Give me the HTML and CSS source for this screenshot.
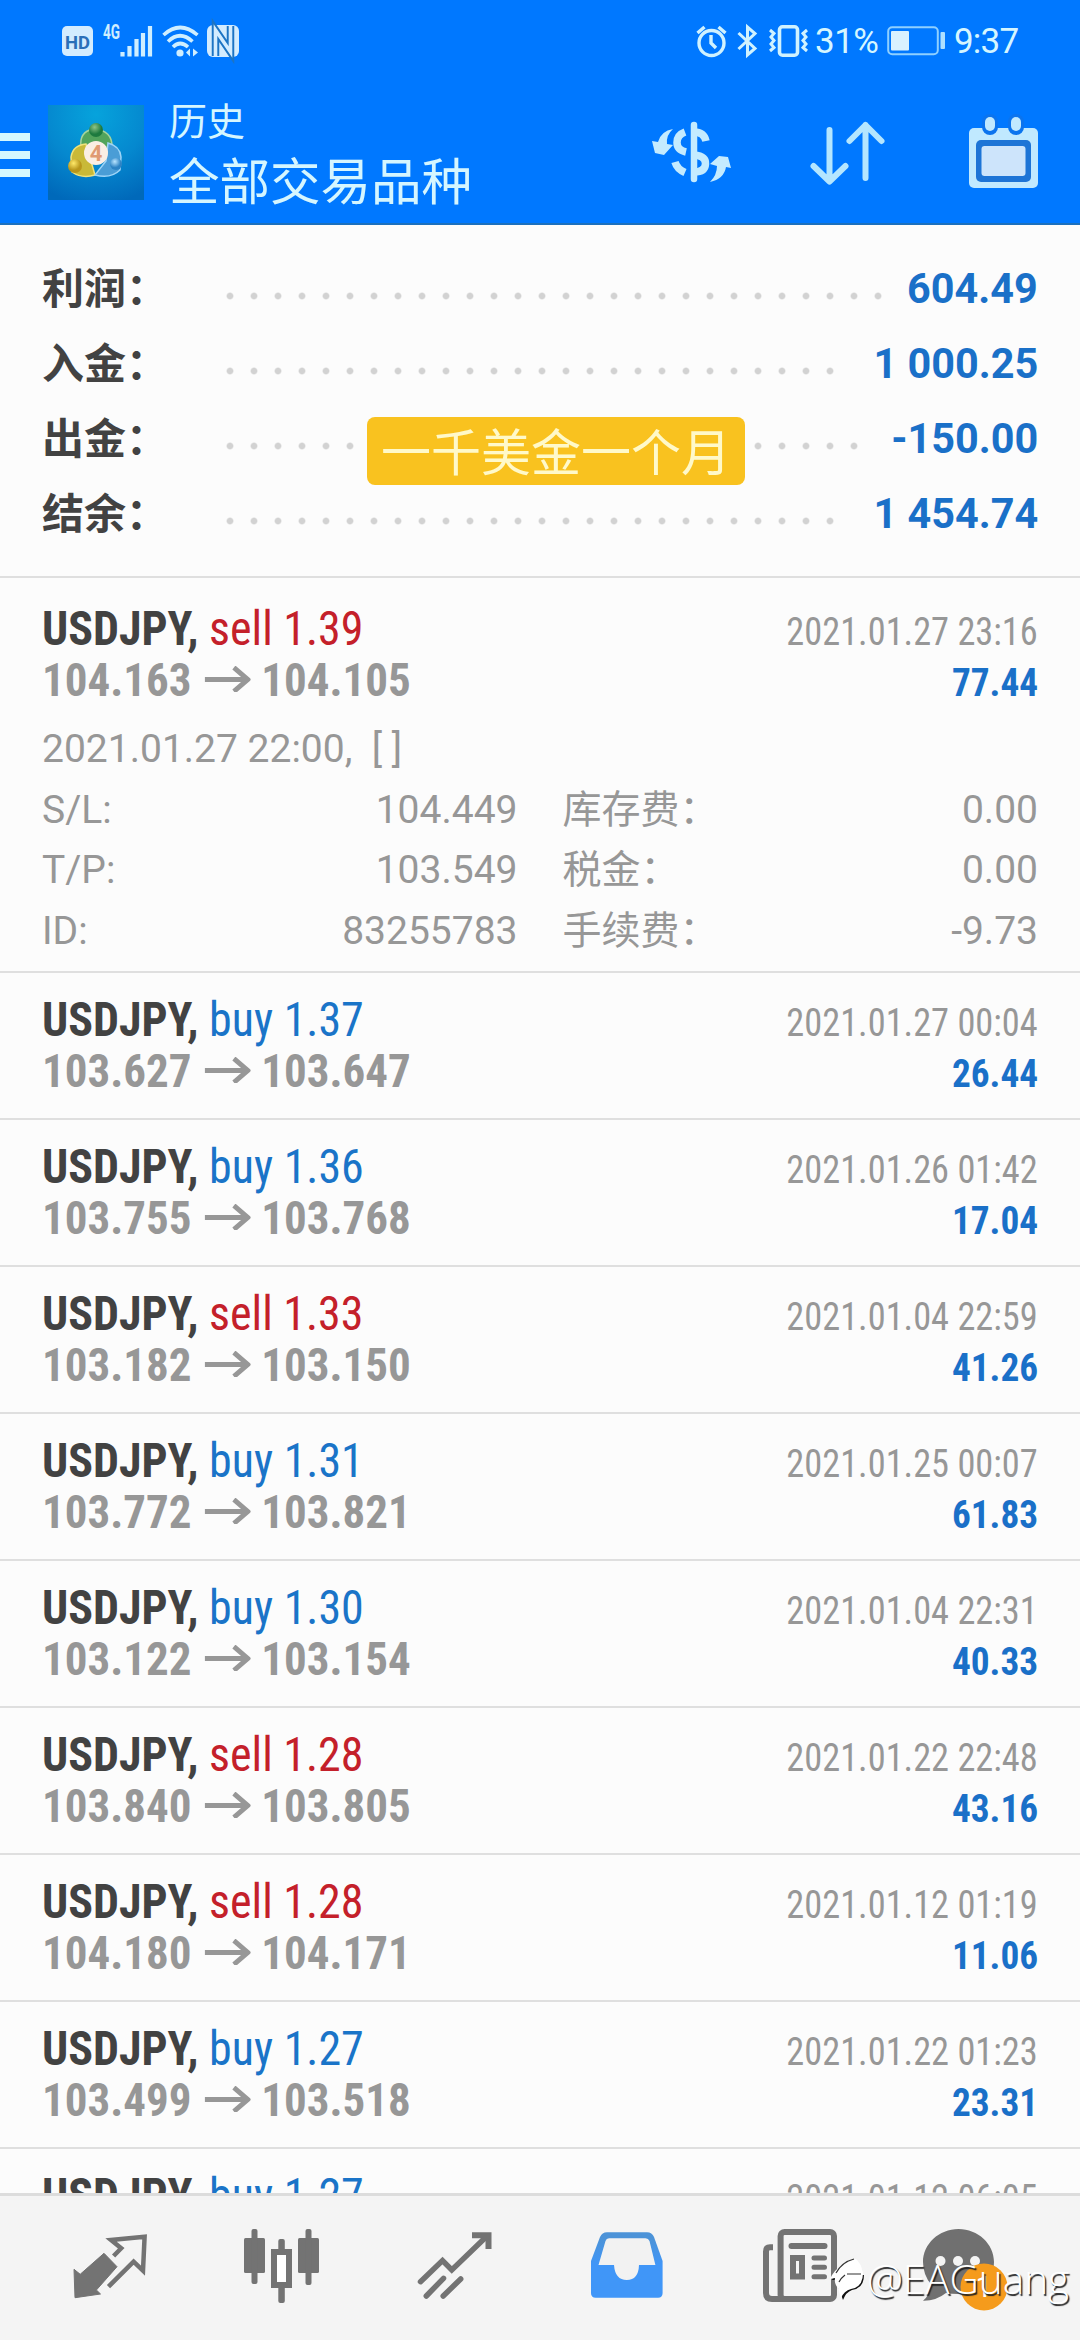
FILE: index.html
```
<!DOCTYPE html>
<html lang="zh-CN">
<head>
<meta charset="utf-8">
<title>历史</title>
<link rel="stylesheet" href="styles.css">
</head>
<body>
<header class="header">
  <div class="status">
    <svg class="st-hd" width="31" height="32" viewBox="0 0 31 32"><rect x="0" y="1" width="31" height="30" rx="5" fill="#d3ecff"/><text x="15.500" y="23.500" text-anchor="middle" class="hd-text" textLength="25" lengthAdjust="spacingAndGlyphs" >HD</text></svg>
    <svg class="st-signal" width="50" height="32" viewBox="0 0 50 32"><text x="0" y="14" class="g-text" textLength="17" lengthAdjust="spacingAndGlyphs">4G</text><path d="M19.500 27v4.500M26.500 21v10.500M33.500 14v17.500M40 8v23.500M47 1v30.500" stroke="#cfeeff" stroke-width="4.200"/></svg>
    <svg class="st-wifi" width="38" height="32" viewBox="0 0 38 32"><g fill="none" stroke="#cfeeff" stroke-width="3.600"><path d="M1.500 10Q18 -5 35.500 10"/><path d="M6 16.500Q18 5 30.500 16.500"/><path d="M11 22Q18 15 26 22"/></g><circle cx="18" cy="28" r="3.600" fill="#cfeeff"/><path d="M28 23.500v8l-4-4zM31 23.500v8l5-4z" fill="#cfeeff"/></svg>
    <svg class="st-nfc" width="32" height="32" viewBox="0 0 32 32"><rect width="32" height="32" rx="6" fill="#d3ecff"/><path d="M8.500 31V5L23.500 27V1" fill="none" stroke="#1c74c4" stroke-width="7.500"/><path d="M8.500 31V5L23.500 27V1" fill="none" stroke="#d3ecff" stroke-width="3.600"/></svg>
    <svg class="st-alarm" width="31" height="32" viewBox="0 0 31 32"><g fill="none" stroke="#cff2ff" stroke-width="3.400"><circle cx="15.500" cy="18" r="12.500"/><path d="M15 10v8l5 5M1.500 8l7-6M29.500 8l-7-6"/></g></svg>
    <svg class="st-bt" width="21" height="32" viewBox="0 0 21 32"><path d="M1.500 8L18 23.500 10.500 30V2L18 8.500 1.500 24" fill="none" stroke="#cff2ff" stroke-width="3"/></svg>
    <svg class="st-vib" width="39" height="32" viewBox="0 0 39 32"><g fill="none" stroke="#cff2ff" stroke-width="3"><rect x="10.500" y="1.800" width="18" height="28.400" rx="3" stroke-width="3.600"/><path d="M1 5l4 3.500-3 3.500 3 3.500-3 3.500 3 3.500-4 3.500M38 5l-4 3.500 3 3.500-3 3.500 3 3.500-3 3.500 4 3.500"/></g></svg>
    <span class="st-pct">31%</span>
    <svg class="st-batt" width="59" height="30" viewBox="0 0 59 30"><rect x="1.200" y="1.200" width="49.600" height="27" rx="4" fill="none" stroke="#8fd0ff" stroke-width="2"/><rect x="4" y="5" width="18" height="19.500" rx="1" fill="#d9f1ff"/><rect x="53.500" y="6" width="4.500" height="17" rx="1" fill="#aee0ff"/></svg>
    <span class="st-time">9:37</span>
  </div>
  <div class="appbar">
    <div class="burger"><i></i><i></i><i></i></div>
    <svg class="logo" width="96" height="95" viewBox="0 0 96 95">
      <defs>
        <radialGradient id="sky" cx=".5" cy=".1" r=".95"><stop offset="0" stop-color="#06a3dc"/><stop offset=".55" stop-color="#0588cf"/><stop offset="1" stop-color="#0069ba"/></radialGradient>
        <radialGradient id="gr" cx=".4" cy=".3"><stop offset="0" stop-color="#8fc487"/><stop offset="1" stop-color="#1d7a3e"/></radialGradient>
        <radialGradient id="ye" cx=".4" cy=".3"><stop offset="0" stop-color="#ffe96a"/><stop offset="1" stop-color="#b8961b"/></radialGradient>
        <radialGradient id="bl" cx=".4" cy=".3"><stop offset="0" stop-color="#b9e4ff"/><stop offset="1" stop-color="#2d83c4"/></radialGradient>
      </defs>
      <rect width="96" height="95" fill="url(#sky)"/>
      <path d="M33 42Q31 27 45 24q20 1 19 19l-6 5H38z" fill="#52a45c" stroke="#a5d39c" stroke-width="1.500"/>
      <path d="M38 39Q25 40 23 52L24 67q10 7 23 3z" fill="#c9b938" stroke="#f0e27b" stroke-width="1.500"/>
      <path d="M60 38q12 3 13 14l-1 13q-9 9-25 5l11-14z" fill="#4a9dd6" stroke="#9dd4f7" stroke-width="1.500"/>
      <circle cx="48" cy="25" r="7" fill="url(#gr)"/><circle cx="27" cy="61" r="7" fill="url(#ye)"/><circle cx="68" cy="59" r="6" fill="url(#bl)"/>
      <circle cx="48" cy="48" r="12" fill="#faeee4"/><text x="48" y="56" text-anchor="middle" class="logo-text">4</text>
    </svg>
    <div class="titles"><div class="t1">历史</div><div class="t2">全部交易品种</div></div>
    <svg class="act-usd" width="80" height="64" viewBox="0 0 80 64"><g fill="none" stroke="#c4ebff" stroke-width="7.500"><path d="M34 11Q26 14 26 21.500T35 31"/><path d="M43 11Q53 11 55 20"/><path d="M43 34Q55 35 54.500 43T43 51"/><path d="M24 41Q26 48 34 51.500"/></g><path d="M43 4v54" stroke="#c4ebff" stroke-width="6.500" stroke-linecap="round"/><path d="M22 8Q10 10 7 21L1 20l3 12 9 2 9-10-6-1Q15 14 22 8zM59 61q14-3 16-15l5 1-3-11-9-1-9 8 7 2q0 9-7 16z" fill="#c4ebff"/></svg>
    <svg class="act-sort" width="73" height="64" viewBox="0 0 73 64"><path d="M18.500 9v51M2.500 45L18.500 60.500 34.500 45M54.500 57V4M38.500 20L54.500 4 70.500 20" fill="none" stroke="#b4e6ff" stroke-width="6" stroke-linecap="round" stroke-linejoin="round"/></svg>
    <svg class="act-cal" width="70" height="72" viewBox="0 0 70 72"><rect x="0" y="11" width="69" height="60" rx="5" fill="#c0e9ff"/><rect x="7" y="23" width="55" height="42" rx="5" fill="#1d74d6"/><rect x="12.500" y="29" width="44" height="30" rx="3" fill="#cde4fb"/><rect x="13" y="-3" width="16" height="21" rx="8" fill="#0b74ee"/><rect x="39" y="-3" width="16" height="21" rx="8" fill="#0b74ee"/><rect x="16" y="0" width="10" height="14" rx="5" fill="#c0e9ff"/><rect x="42" y="0" width="10" height="14" rx="5" fill="#c0e9ff"/></svg>
  </div>
</header>

<section class="summary">
  <div class="sum-row"><span class="label">利润：</span><span class="dots dots-28"></span><span class="amount">604.49</span></div>
  <div class="sum-row"><span class="label">入金：</span><span class="dots dots-26"></span><span class="amount">1 000.25</span></div>
  <div class="sum-row"><span class="label">出金：</span><span class="dots dots-27"></span><span class="amount">-150.00</span></div>
  <div class="sum-row"><span class="label">结余：</span><span class="dots dots-26"></span><span class="amount">1 454.74</span></div>
  <div class="sticker">一千美金一个月</div>
</section>

<svg width="0" height="0" class="defs"><symbol id="arrow" viewBox="0 0 48 26"><path d="M0 13.500h44M30.500 1.500L45 13.500 30.500 25.500" fill="none" stroke="#979797" stroke-width="5"/></symbol></svg>

<main class="list">
  <article class="deal open">
    <div class="line"><span class="name"><b>USDJPY,</b> <span class="sell">sell 1.39</span></span><span class="date">2021.01.27 23:16</span></div>
    <div class="line"><span class="price">104.163<svg class="arr"><use href="#arrow"/></svg>104.105</span><span class="profit">77.44</span></div>
    <div class="detail">
      <div class="wide">2021.01.27 22:00,&nbsp; [ ]</div>
      <div class="pair"><span>S/L:</span><span>104.449</span></div><div class="pair"><span>库存费：</span><span>0.00</span></div>
      <div class="pair"><span>T/P:</span><span>103.549</span></div><div class="pair"><span>税金：</span><span>0.00</span></div>
      <div class="pair"><span>ID:</span><span>83255783</span></div><div class="pair"><span>手续费：</span><span>-9.73</span></div>
    </div>
  </article>
  <article class="deal">
    <div class="line"><span class="name"><b>USDJPY,</b> <span class="buy">buy 1.37</span></span><span class="date">2021.01.27 00:04</span></div>
    <div class="line"><span class="price">103.627<svg class="arr"><use href="#arrow"/></svg>103.647</span><span class="profit">26.44</span></div>
  </article>
  <article class="deal">
    <div class="line"><span class="name"><b>USDJPY,</b> <span class="buy">buy 1.36</span></span><span class="date">2021.01.26 01:42</span></div>
    <div class="line"><span class="price">103.755<svg class="arr"><use href="#arrow"/></svg>103.768</span><span class="profit">17.04</span></div>
  </article>
  <article class="deal">
    <div class="line"><span class="name"><b>USDJPY,</b> <span class="sell">sell 1.33</span></span><span class="date">2021.01.04 22:59</span></div>
    <div class="line"><span class="price">103.182<svg class="arr"><use href="#arrow"/></svg>103.150</span><span class="profit">41.26</span></div>
  </article>
  <article class="deal">
    <div class="line"><span class="name"><b>USDJPY,</b> <span class="buy">buy 1.31</span></span><span class="date">2021.01.25 00:07</span></div>
    <div class="line"><span class="price">103.772<svg class="arr"><use href="#arrow"/></svg>103.821</span><span class="profit">61.83</span></div>
  </article>
  <article class="deal">
    <div class="line"><span class="name"><b>USDJPY,</b> <span class="buy">buy 1.30</span></span><span class="date">2021.01.04 22:31</span></div>
    <div class="line"><span class="price">103.122<svg class="arr"><use href="#arrow"/></svg>103.154</span><span class="profit">40.33</span></div>
  </article>
  <article class="deal">
    <div class="line"><span class="name"><b>USDJPY,</b> <span class="sell">sell 1.28</span></span><span class="date">2021.01.22 22:48</span></div>
    <div class="line"><span class="price">103.840<svg class="arr"><use href="#arrow"/></svg>103.805</span><span class="profit">43.16</span></div>
  </article>
  <article class="deal">
    <div class="line"><span class="name"><b>USDJPY,</b> <span class="sell">sell 1.28</span></span><span class="date">2021.01.12 01:19</span></div>
    <div class="line"><span class="price">104.180<svg class="arr"><use href="#arrow"/></svg>104.171</span><span class="profit">11.06</span></div>
  </article>
  <article class="deal">
    <div class="line"><span class="name"><b>USDJPY,</b> <span class="buy">buy 1.27</span></span><span class="date">2021.01.22 01:23</span></div>
    <div class="line"><span class="price">103.499<svg class="arr"><use href="#arrow"/></svg>103.518</span><span class="profit">23.31</span></div>
  </article>
  <article class="deal">
    <div class="line"><span class="name"><b>USDJPY,</b> <span class="buy">buy 1.27</span></span><span class="date">2021.01.12 06:05</span></div>
  </article>
</main>

<nav class="nav">
  <svg viewBox="0 0 100 100"><path d="M14 51.300L20.200 56.300 44 35.300 57 48.700 36.400 72 40.500 76 15 79.700z" fill="#737373" stroke="#737373" stroke-linejoin="round"/><path d="M53.600 38L61.200 30.300 51 22 84.600 18.700 83 52.700 73.600 43.700 48.500 68.700" fill="none" stroke="#737373" stroke-width="4.500"/></svg>
  <svg viewBox="0 0 100 100"><g fill="#737373"><rect x="12" y="20" width="21" height="35" rx="1.500"/><rect x="66" y="20" width="21" height="35" rx="1.500"/><rect x="19.500" y="11" width="6" height="55" rx="2"/><rect x="73.500" y="11" width="6" height="56" rx="2"/><rect x="46.300" y="21" width="6.500" height="14" rx="2"/><rect x="46.300" y="67" width="6.500" height="18" rx="2"/></g><rect x="42" y="34" width="15" height="33" fill="#fff" stroke="#737373" stroke-width="6"/></svg>
  <svg viewBox="0 0 100 100"><g fill="none" stroke="#737373" stroke-width="5.500" stroke-linecap="round"><path d="M16.500 63.700L38.500 42.500 47.800 52 82 19"/><path d="M22.300 78L39.500 60.300M39.200 78L56.700 61"/></g><path d="M68 17.300h16.500V31" fill="none" stroke="#737373" stroke-width="6"/></svg>
  <svg viewBox="0 0 100 100"><defs><linearGradient id="tray" x1="0" y1="0" x2="0" y2="1"><stop offset=".1" stop-color="#4c93d8"/><stop offset=".5" stop-color="#4096f8"/></linearGradient></defs><path d="M15 75V43L24 19Q26 14.300 31 14.300H71Q76 14.300 78 19L86.600 43V75Q86.600 79.700 82 79.700H19.700Q15 79.700 15 75z" fill="url(#tray)"/><path d="M22.500 47L29.500 23Q30.300 20.300 33 20.300H69.500Q72.500 20.300 73.500 23L79.400 47H63Q62.500 62 50.800 62T38 47z" fill="#f2f2f2"/></svg>
  <svg viewBox="0 0 100 100"><g fill="none" stroke="#737373" stroke-width="6"><rect x="32.600" y="14" width="53.400" height="67" rx="4"/><path d="M25 29.300H22Q18 29.300 18 33.500V75Q18 81 24 81H60"/><rect x="45" y="40" width="9" height="18.500"/><path d="M43.500 28H76.500" stroke-linecap="round"/><path d="M66 40H76.500M66 49.300H76.500M66 58.700H76.500" stroke-width="5" stroke-linecap="round"/></g></svg>
  <div class="chat">
    <svg viewBox="0 0 100 100"><path d="M38.500 11C58 11 74 26 74 44S58 76 38.500 76Q31 76 26 75Q16 83 3 82.700Q10 77 11.500 67Q3 57 3 44C3 26 19 11 38.500 11z" fill="#707070"/><g fill="#f4f4f4"><circle cx="20.500" cy="43" r="5"/><circle cx="38" cy="43" r="5"/><circle cx="55" cy="43" r="5"/></g><circle cx="64" cy="69" r="23.500" fill="#f59b1c"/></svg>
    <span class="count">1</span>
  </div>
</nav>

<div class="watermark">
  <svg width="34" height="42" viewBox="0 0 34 42"><path d="M1 21Q4 12 11 9Q17 2 27 2L14 16H33Q33 29 21 31Q15 33 12 41L8 30Q5 26 6 21z" fill="#111" transform="translate(1 1)"/><path d="M0 21Q4 12 11 8Q17 1 26 1Q31 5 33 15Q33 29 21 31Q14 33 11 40L8 30Q4 26 5 20z" fill="#fff"/><path d="M6 15Q12 4 24 1M17 16H31M15 17Q11 20 9 24" fill="none" stroke="#333" stroke-width="1.200"/></svg>
  <span>@EAGuang</span>
</div>
</body>
</html>
```
FILE: styles.css
```
* { box-sizing: border-box; }
body {
  margin: 0;
  width: 1080px;
  height: 2340px;
  display: flex;
  flex-direction: column;
  position: relative;
  overflow: hidden;
  background: #fcfcfc;
  font-family: Roboto, "Noto Sans CJK SC", sans-serif;
  color: #979797;
}
svg { display: block; flex: none; overflow: visible; }
.defs { position: absolute; }

/* header */
.header { height: 225px; flex: none; background: #0078ff; color: #d5f6ff; border-bottom: 2px solid #1c70bd; }
.status { height: 81px; display: flex; align-items: center; padding-left: 62px; font-size: 35px; line-height: 40px; }
.st-signal { margin-left: 10px; }
.st-wifi { margin-left: 9px; }
.st-nfc { margin-left: 7px; }
.st-alarm { margin-left: 457px; }
.st-bt { margin-left: 10px; }
.st-vib { margin-left: 11px; }
.st-pct { margin-left: 7px; width: 72px; padding-top: 2px; letter-spacing: -0.5px; }
.st-time { margin-left: 8px; padding-top: 2px; letter-spacing: -0.8px; }
.hd-text { font: 700 19px Roboto, sans-serif; fill: #2a6fb8; }
.g-text { font: 700 20px Roboto, sans-serif; fill: #cfeeff; }
.appbar { height: 143px; display: flex; align-items: center; }
.burger { width: 30px; display: flex; flex-direction: column; gap: 10px; padding-top: 5px; }
.burger i { height: 8px; background: #d5f8ff; }
.logo { margin-left: 18px; }
.logo-text { font: 700 22px Roboto, sans-serif; fill: #e09a72; }
.titles { margin-left: 25px; flex: 1; }
.t1 { font-size: 38px; line-height: 60px; }
.t2 { font-size: 50.5px; line-height: 62px; }
.act-sort { margin-left: 80px; }
.act-cal { margin: 0 41px 0 85px; }

/* account summary */
.summary { height: 353px; flex: none; position: relative; padding: 26px 42px 0; border-bottom: 2px solid #dfdfdf; }
.sum-row { height: 75px; display: flex; align-items: center; font-size: 42px; line-height: 50px; font-weight: 700; }
.label { width: 176px; padding-top: 2px; color: #424242; }
.dots { height: 8px; margin-top: 15px; background: radial-gradient(circle at 50% 50%, #d2d2d2 2.6px, transparent 4px) 0 0 / 24px 8px repeat-x; }
.dots-26 { width: 624px; }
.dots-27 { width: 648px; }
.dots-28 { width: 672px; }
.amount { margin-left: auto; color: #1a70c8; transform: scaleX(.985); transform-origin: 100% 50%; }
.sticker {
  position: absolute; left: 367px; top: 192px; width: 378px; height: 68px;
  border-radius: 8px; background: #f9c21f; color: #fff9c9;
  font-size: 50px; line-height: 74px; text-align: center; white-space: nowrap;
}

/* deals */
.list { flex: 1; min-height: 0; overflow: hidden; }
.deal { height: 147px; padding: 21px 42px 0; border-bottom: 2px solid #dfdfdf; }
.deal.open { height: 395px; padding-top: 25px; }
.line { height: 51px; line-height: 52px; display: flex; justify-content: space-between; align-items: baseline; white-space: nowrap; font-stretch: condensed; }
.name, .price { transform: scaleX(.957); transform-origin: 0 50%; font-size: 48px; }
.name b { color: #424242; }
.price { font-size: 47px; font-weight: 700; }
.arr { display: inline-block; width: 48px; height: 26px; margin: 0 11px 0 14px; vertical-align: 4px; }
.sell { color: #c4202a; }
.buy { color: #1a74c8; }
.date, .profit { font-size: 39px; transform: scaleX(.932); transform-origin: 100% 50%; }
.profit { font-weight: 700; color: #1a70c8; transform: scaleX(.957); }
.detail { margin-top: 14px; display: grid; grid-template-columns: 1fr 1fr; column-gap: 45px; font-size: 39px; line-height: 60.5px; }
.wide { grid-column: 1 / -1; }
.pair { height: 60.5px; display: flex; justify-content: space-between; }

/* bottom navigation */
.nav { height: 147px; flex: none; display: grid; grid-template-columns: repeat(6, 172px); justify-content: center; justify-items: center; align-items: center; background: #f4f4f4; border-top: 3px solid #dcdcdc; }
.nav svg { width: 100px; height: 100px; }
.chat { position: relative; }
.count { position: absolute; left: 54px; top: 52px; width: 20px; text-align: center; color: #fff; font-size: 30px; line-height: 34px; }

.watermark { position: absolute; left: 830px; top: 2252px; display: flex; align-items: center; gap: 3px; font: 300 40.5px/54px "Open Sans", "Noto Sans", sans-serif; color: #fff; text-shadow: 1.5px 1.5px 1px #222; }
```
